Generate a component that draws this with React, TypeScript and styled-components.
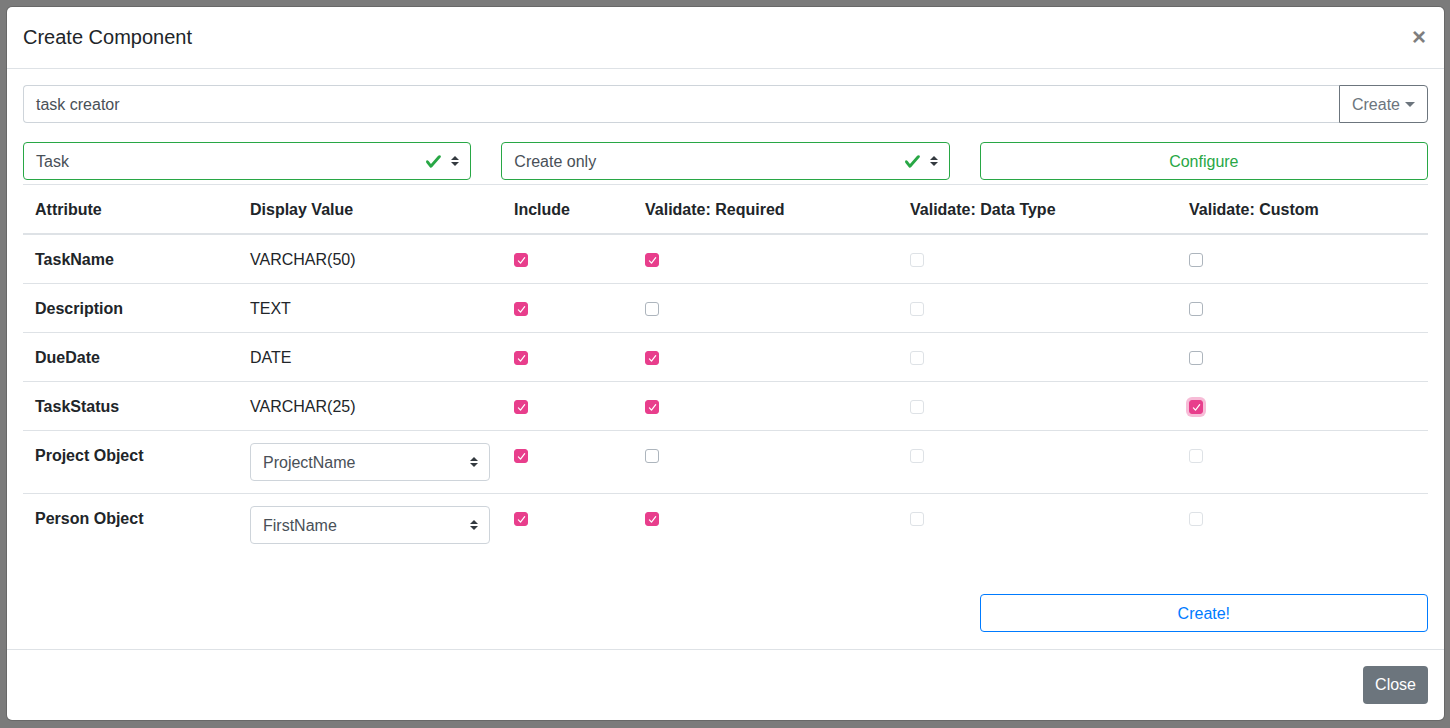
import React from 'react';
import styled, { createGlobalStyle, css } from 'styled-components';

const Global = createGlobalStyle`
  html, body { margin: 0; padding: 0; }
  body {
    font-family: "Liberation Sans", Arial, Helvetica, sans-serif;
    font-size: 16px;
    line-height: 1.5;
    color: #212529;
    background: #7b7b7b;
  }
  * { box-sizing: border-box; }
`;

const Backdrop = styled.div`
  width: 1450px;
  height: 728px;
  padding: 7px 0 0 7px;
  overflow: hidden;
  background: #7b7b7b;
`;

const Modal = styled.div`
  width: 1437px;
  height: 713px;
  background: #fff;
  border-radius: 5px;
  display: flex;
  flex-direction: column;
  box-shadow: 0 0 0 1px rgba(0, 0, 0, 0.15);
`;

const Header = styled.div`
  display: flex;
  align-items: center;
  justify-content: space-between;
  padding: 15px 16px 16px;
  border-bottom: 1px solid #dee2e6;
`;

const Title = styled.h5`
  margin: 0;
  font-size: 20px;
  line-height: 30px;
  font-weight: 500;
  color: #212529;
`;

const CloseX = styled.span`
  font-size: 24px;
  font-weight: 700;
  line-height: 1;
  color: #000;
  opacity: 0.5;
  margin-right: 2px;
`;

const Body = styled.div`
  flex: 1;
  padding: 16px;
  display: flex;
  flex-direction: column;
`;

const InputGroup = styled.div`
  display: flex;
  height: 38px;
`;

const TextInput = styled.div`
  flex: 1;
  border: 1px solid #ced4da;
  border-right: none;
  border-radius: 4px 0 0 4px;
  padding: 7px 12px 5px;
  color: #495057;
`;

const DropButton = styled.div`
  display: flex;
  align-items: center;
  gap: 5px;
  padding: 7px 12px 5px;
  border: 1px solid #6c757d;
  border-radius: 0 4px 4px 0;
  color: #6c757d;
`;

const Caret = styled.span`
  width: 0;
  height: 0;
  border-left: 5px solid transparent;
  border-right: 5px solid transparent;
  border-top: 5px solid #6c757d;
  margin-top: -1px;
`;

const ThreeCols = styled.div<{ $mt: number }>`
  display: grid;
  grid-template-columns: repeat(3, 1fr);
  column-gap: 30px;
  margin-top: ${p => p.$mt}px;
`;

const SelectBox = styled.div<{ $valid?: boolean; $width?: number }>`
  display: flex;
  align-items: center;
  height: 38px;
  width: ${p => (p.$width ? `${p.$width}px` : 'auto')};
  padding: 0 12px;
  border: 1px solid ${p => (p.$valid ? '#28a745' : '#ced4da')};
  border-radius: 4px;
  color: #495057;
  background: #fff;
`;

const SelectText = styled.span`
  flex: 1;
  padding-top: 2px;
`;

const SelectIcons = styled.span`
  display: flex;
  align-items: center;
  gap: 9px;
  margin-right: -1px;
`;

const OutlineButton = styled.div<{ $color: string }>`
  display: flex;
  align-items: center;
  justify-content: center;
  height: 38px;
  padding-top: 2px;
  border: 1px solid ${p => p.$color};
  border-radius: 4px;
  color: ${p => p.$color};
`;

const Table = styled.table`
  width: 100%;
  margin-top: 4px;
  border-collapse: collapse;
  table-layout: fixed;
`;

const Col = styled.col<{ $w?: number }>`
  width: ${p => (p.$w ? `${p.$w}px` : 'auto')};
`;

const Th = styled.th`
  padding: 13px 12px 11px;
  text-align: left;
  font-weight: 700;
  vertical-align: bottom;
  border-top: 1px solid #dee2e6;
  border-bottom: 2px solid #dee2e6;
`;

const Td = styled.td<{ $bold?: boolean }>`
  padding: 12px;
  vertical-align: top;
  border-top: 1px solid #dee2e6;
  font-weight: ${p => (p.$bold ? 700 : 400)};
`;

const CellText = styled.span`
  display: block;
  position: relative;
  top: 1px;
`;

const CheckWrap = styled.span`
  display: flex;
  align-items: center;
  height: 24px;
  padding-top: 2px;
`;

const Box = styled.span<{ $checked?: boolean; $disabled?: boolean; $focus?: boolean }>`
  display: inline-flex;
  align-items: center;
  justify-content: center;
  width: 14px;
  height: 14px;
  border-radius: 3px;
  border: 1px solid #adb5bd;
  background: #fff;
  ${p =>
    p.$disabled &&
    css`
      border-color: #dee2e6;
    `}
  ${p =>
    p.$checked &&
    css`
      border-color: #e83e8c;
      background: #e83e8c;
    `}
  ${p =>
    p.$focus &&
    css`
      box-shadow: 0 0 0 3px rgba(232, 62, 140, 0.35);
    `}
`;

const Footer = styled.div`
  display: flex;
  justify-content: flex-end;
  padding: 12px;
  border-top: 1px solid #dee2e6;
`;

const SolidButton = styled.div`
  margin: 4px;
  padding: 7px 12px 5px;
  height: 38px;
  border-radius: 4px;
  background: #6c757d;
  color: #fff;
`;

const ValidCheck = () => (
  <svg width="17" height="17" viewBox="0 0 8 8">
    <path
      fill="#28a745"
      d="M2.3 6.73L.6 4.53c-.4-1.04.46-1.4 1.1-.8l1.1 1.4 3.4-3.8c.6-.63 1.6-.27 1.2.7l-4 4.6c-.43.5-.8.4-1.1.1z"
    />
  </svg>
);

const Arrows = () => (
  <svg width="8" height="10" viewBox="0 0 4 5">
    <path fill="#343a40" d="M2 0L0 2h4zm0 5L0 3h4z" />
  </svg>
);

const Tick = () => (
  <svg width="9" height="9" viewBox="0 0 9 9">
    <path
      d="M1.4 4.9 L3.5 7.1 L7.7 1.7"
      fill="none"
      stroke="#fff"
      strokeWidth="1.2"
      strokeLinecap="round"
      strokeLinejoin="round"
    />
  </svg>
);

type CB = { checked?: boolean; disabled?: boolean; focus?: boolean };

const Check = ({ checked, disabled, focus }: CB) => (
  <CheckWrap>
    <Box $checked={checked} $disabled={disabled} $focus={focus}>
      {checked && <Tick />}
    </Box>
  </CheckWrap>
);

const Select = ({ value, valid, width }: { value: string; valid?: boolean; width?: number }) => (
  <SelectBox $valid={valid} $width={width}>
    <SelectText>{value}</SelectText>
    <SelectIcons>
      {valid && <ValidCheck />}
      <Arrows />
    </SelectIcons>
  </SelectBox>
);

type Row = {
  name: string;
  display?: string;
  select?: string;
  checks: CB[];
};

const rows: Row[] = [
  { name: 'TaskName', display: 'VARCHAR(50)', checks: [{ checked: true }, { checked: true }, { disabled: true }, {}] },
  { name: 'Description', display: 'TEXT', checks: [{ checked: true }, {}, { disabled: true }, {}] },
  { name: 'DueDate', display: 'DATE', checks: [{ checked: true }, { checked: true }, { disabled: true }, {}] },
  {
    name: 'TaskStatus',
    display: 'VARCHAR(25)',
    checks: [{ checked: true }, { checked: true }, { disabled: true }, { checked: true, focus: true }],
  },
  {
    name: 'Project Object',
    select: 'ProjectName',
    checks: [{ checked: true }, {}, { disabled: true }, { disabled: true }],
  },
  {
    name: 'Person Object',
    select: 'FirstName',
    checks: [{ checked: true }, { checked: true }, { disabled: true }, { disabled: true }],
  },
];

const headers = ['Attribute', 'Display Value', 'Include', 'Validate: Required', 'Validate: Data Type', 'Validate: Custom'];
const widths = [215, 264, 131, 265, 279, 0];

export default function App() {
  return (
    <>
      <Global />
      <Backdrop>
        <Modal>
          <Header>
            <Title>Create Component</Title>
            <CloseX>×</CloseX>
          </Header>
          <Body>
            <InputGroup>
              <TextInput>task creator</TextInput>
              <DropButton>
                Create <Caret />
              </DropButton>
            </InputGroup>
            <ThreeCols $mt={19}>
              <Select value="Task" valid />
              <Select value="Create only" valid />
              <OutlineButton $color="#28a745">Configure</OutlineButton>
            </ThreeCols>
            <Table>
              <colgroup>
                {widths.map((w, i) => (
                  <Col key={i} $w={w || undefined} />
                ))}
              </colgroup>
              <thead>
                <tr>
                  {headers.map(h => (
                    <Th key={h}>{h}</Th>
                  ))}
                </tr>
              </thead>
              <tbody>
                {rows.map(r => (
                  <tr key={r.name}>
                    <Td $bold>
                      <CellText>{r.name}</CellText>
                    </Td>
                    <Td>
                      {r.select ? <Select value={r.select} width={240} /> : <CellText>{r.display}</CellText>}
                    </Td>
                    {r.checks.map((c, i) => (
                      <Td key={i}>
                        <Check {...c} />
                      </Td>
                    ))}
                  </tr>
                ))}
              </tbody>
            </Table>
            <ThreeCols $mt={38}>
              <span />
              <span />
              <OutlineButton $color="#007bff">Create!</OutlineButton>
            </ThreeCols>
          </Body>
          <Footer>
            <SolidButton>Close</SolidButton>
          </Footer>
        </Modal>
      </Backdrop>
    </>
  );
}
